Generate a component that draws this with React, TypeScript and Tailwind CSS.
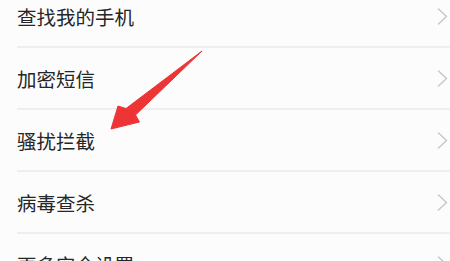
const items = ['查找我的手机', '加密短信', '骚扰拦截', '病毒查杀', '更多安全设置']

function Chevron() {
    return (
        <svg width="11" height="17" viewBox="0 0 11 17" fill="none" className="shrink-0">
            <path d="M1.5 1 L9.5 8.5 L1.5 16" stroke="#c8c8c8" strokeWidth="1.5" strokeLinecap="round" strokeLinejoin="round" />
        </svg>
    )
}

export default function App() {
    return (
        <div className="relative w-[450px] h-[261px] overflow-hidden bg-[#fcfcfc] font-['Noto_Sans_CJK_SC',sans-serif]">
            <ul className="-mt-[14px] pl-[17px]">
                {items.map((label) => (
                    <li key={label} className="h-[62px] flex items-center justify-between border-b-2 border-[#efefef] pr-[2px]">
                        <span className="text-[19.5px] leading-none text-[#262626] pt-[2px]">{label}</span>
                        <Chevron />
                    </li>
                ))}
            </ul>

            {/* red annotation arrow */}
            <svg className="absolute left-0 top-0 pointer-events-none" width="450" height="261" viewBox="0 0 450 261">
                <path
                    d="M202 51 L135.5 115 L139.5 122 L111 129 L118 106 L126 108.5 Z"
                    fill="#ee3535"
                    stroke="#ee3535"
                    strokeWidth="1"
                    strokeLinejoin="round"
                />
            </svg>
        </div>
    )
}
